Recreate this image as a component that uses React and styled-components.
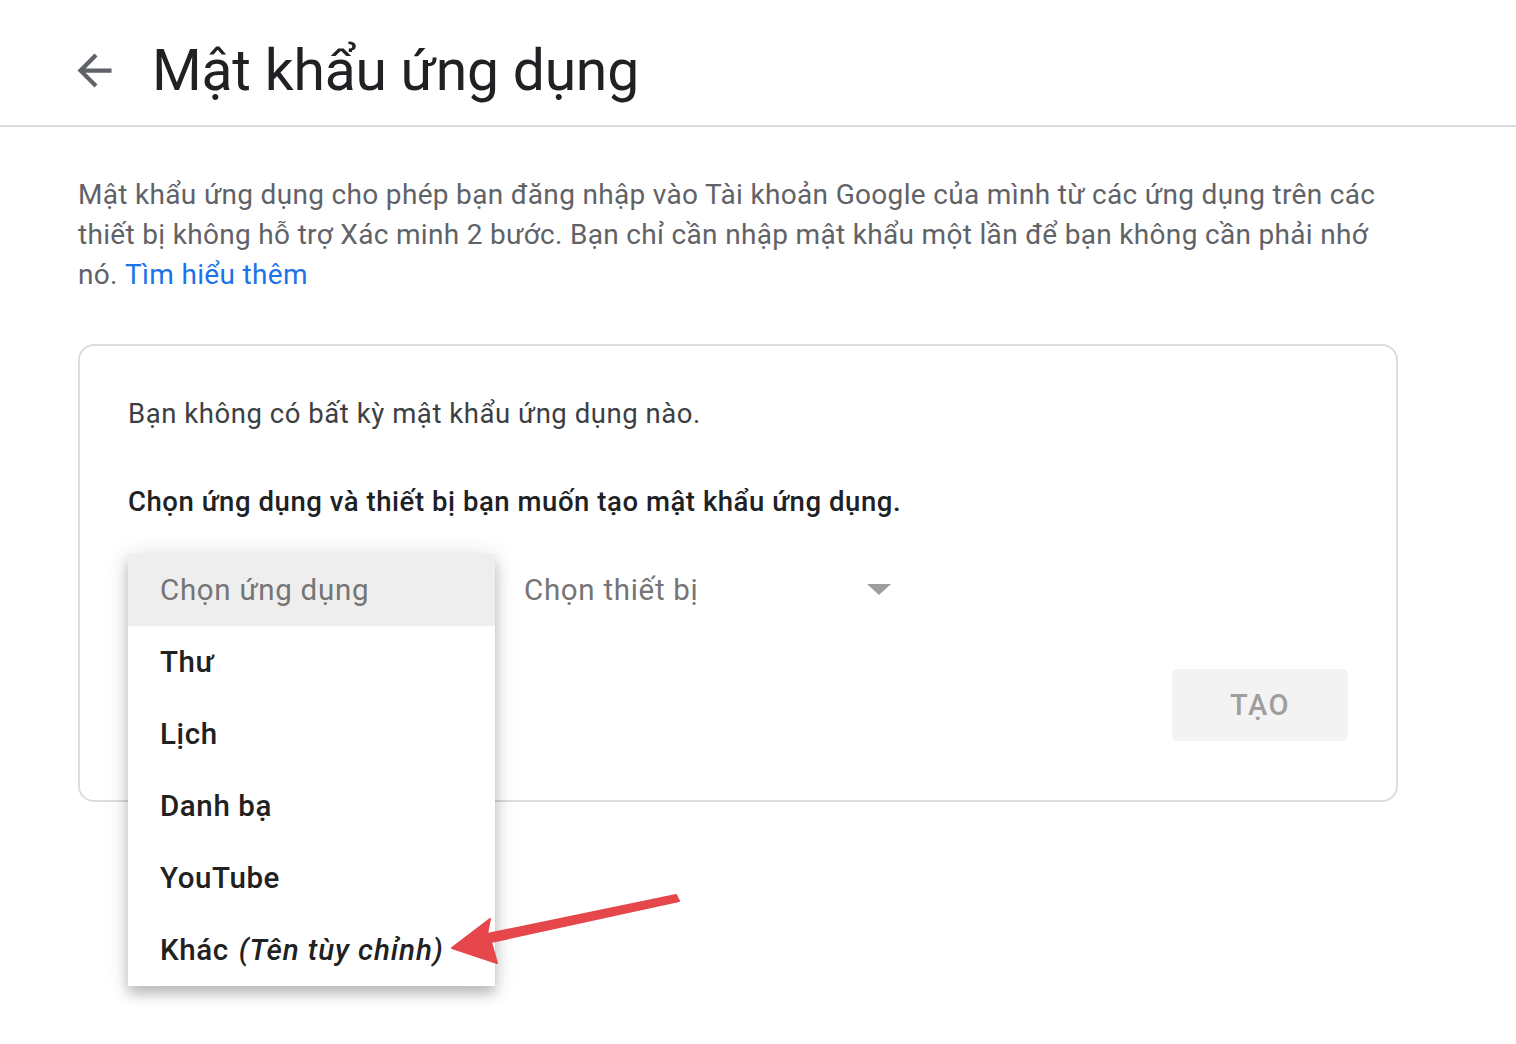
import React from 'react';
import styled, { createGlobalStyle } from 'styled-components';

const Global = createGlobalStyle`
  html, body { margin: 0; padding: 0; background: #fff; }
  body { font-family: Roboto, "Noto Sans", Arial, sans-serif; -webkit-font-smoothing: antialiased; }
`;

const apps = ['Thư', 'Lịch', 'Danh bạ', 'YouTube'];

function App() {
  const open = true;
  return (
    <Page>
      <Global />
      <Header>
        <BackButton aria-label="Quay lại">
          <svg viewBox="0 0 24 24" width="51" height="51">
            <path fill="#5f6368" d="M20 11H7.83l5.59-5.59L12 4l-8 8 8 8 1.41-1.41L7.83 13H20v-2z" />
          </svg>
        </BackButton>
        <Title>Mật khẩu ứng dụng</Title>
      </Header>

      <Content>
        <Intro>
          Mật khẩu ứng dụng cho phép bạn đăng nhập vào Tài khoản Google của mình từ các ứng dụng trên các
          thiết bị không hỗ trợ Xác minh 2 bước. Bạn chỉ cần nhập mật khẩu một lần để bạn không cần phải nhớ
          nó.&nbsp;<Link href="#">Tìm hiểu thêm</Link>
        </Intro>

        <Card>
          <Note>Bạn không có bất kỳ mật khẩu ứng dụng nào.</Note>
          <Prompt>Chọn ứng dụng và thiết bị bạn muốn tạo mật khẩu ứng dụng.</Prompt>

          <SelectRow>
            <SelectWrap>
              <Select $open={open}>Chọn ứng dụng</Select>
              {open && (
                <Menu>
                  <MenuItem $placeholder $active>Chọn ứng dụng</MenuItem>
                  {apps.map((a) => (
                    <MenuItem key={a}>{a}</MenuItem>
                  ))}
                  <MenuItem>
                    Khác <em>(Tên tùy chỉnh)</em>
                  </MenuItem>
                </Menu>
              )}
            </SelectWrap>
            <DeviceSelect>
              Chọn thiết bị
              <Caret />
            </DeviceSelect>
          </SelectRow>

          <Actions>
            <CreateButton disabled>TẠO</CreateButton>
          </Actions>
        </Card>
      </Content>

      <Annotation viewBox="0 0 250 90" width="250" height="90">
        <polygon
          fill="#e5474b"
          points="12,63 50,34 47,49 236,10 239,16 51,57 57,78"
          strokeLinejoin="round"
          stroke="#e5474b"
          strokeWidth="2"
        />
      </Annotation>
    </Page>
  );
}

export default App;

const Page = styled.div`
  position: relative;
  min-height: 1044px;
  overflow: hidden;
`;

const Header = styled.header`
  display: flex;
  align-items: center;
  height: 127px;
  padding: 16px 0 0 69px;
  border-bottom: 2px solid #dadce0;
  box-sizing: border-box;
`;

const BackButton = styled.button`
  display: flex;
  align-items: center;
  justify-content: center;
  padding: 0;
  border: 0;
  background: none;
  cursor: pointer;
`;

const Title = styled.h1`
  margin: 0 0 0 32px;
  font-family: Roboto, "Noto Sans", Arial, sans-serif;
  font-size: 57px;
  font-weight: 400;
  color: #202124;
  letter-spacing: -0.2px;
`;

const Content = styled.main`
  width: 1320px;
  padding: 48px 0 0 78px;
`;

const Intro = styled.p`
  margin: 0;
  font-size: 28px;
  line-height: 40px;
  color: #5f6368;
  letter-spacing: 0.32px;
`;

const Link = styled.a`
  color: #1a73e8;
  text-decoration: none;
`;

const Card = styled.section`
  margin-top: 49px;
  border: 2px solid #dadce0;
  border-radius: 16px;
  padding: 48px 48px 58px 48px;
  box-sizing: border-box;
  height: 458px;
`;

const Note = styled.p`
  margin: 0;
  font-size: 27.5px;
  line-height: 40px;
  color: #3c4043;
  letter-spacing: 0.55px;
`;

const Prompt = styled.p`
  margin: 48px 0 0;
  font-size: 27.5px;
  line-height: 40px;
  font-weight: 500;
  color: #202124;
  letter-spacing: 0.55px;
`;

const SelectRow = styled.div`
  display: flex;
  align-items: center;
  margin-top: 32px;
  height: 72px;
`;

const SelectWrap = styled.div`
  position: relative;
  width: 367px;
  height: 72px;
`;

const Select = styled.div`
  height: 72px;
  display: flex;
  align-items: center;
  padding-left: 33px;
  font-size: 29.5px;
  color: #757575;
  visibility: ${(p) => (p.$open ? 'hidden' : 'visible')};
`;

const Menu = styled.ul`
  position: absolute;
  top: 0;
  left: 0;
  width: 367px;
  margin: 0;
  padding: 0;
  list-style: none;
  background: #fff;
  box-shadow: 0 8px 12px rgba(0, 0, 0, 0.22), 0 2px 24px rgba(0, 0, 0, 0.12);
  z-index: 2;
`;

const MenuItem = styled.li`
  height: 72px;
  display: flex;
  align-items: center;
  gap: 10px;
  padding-left: 32px;
  font-size: 29.5px;
  font-weight: ${(p) => (p.$placeholder ? 400 : 500)};
  color: ${(p) => (p.$placeholder ? '#757575' : '#212121')};
  background: ${(p) => (p.$active ? '#eeeeee' : '#fff')};
  letter-spacing: ${(p) => (p.$placeholder ? '0.7px' : '0.6px')};

  em {
    font-style: italic;
    font-weight: 500;
    letter-spacing: 0.9px;
  }
`;

const DeviceSelect = styled.div`
  position: relative;
  display: flex;
  align-items: center;
  width: 367px;
  height: 72px;
  margin-left: 29px;
  font-size: 29.5px;
  color: #757575;
  letter-spacing: 0.7px;
`;

const Caret = styled.span`
  position: absolute;
  right: 0;
  top: 30px;
  width: 0;
  height: 0;
  border-left: 12px solid transparent;
  border-right: 12px solid transparent;
  border-top: 11px solid #9e9e9e;
`;

const Actions = styled.div`
  display: flex;
  justify-content: flex-end;
  margin-top: 43px;
`;

const CreateButton = styled.button`
  width: 176px;
  height: 72px;
  border: 0;
  border-radius: 6px;
  background: #f3f3f3;
  color: #9e9e9e;
  font-family: Roboto, "Noto Sans", Arial, sans-serif;
  font-size: 29px;
  font-weight: 500;
  letter-spacing: 1.5px;
`;

const Annotation = styled.svg`
  position: absolute;
  left: 440px;
  top: 885px;
  z-index: 3;
`;
